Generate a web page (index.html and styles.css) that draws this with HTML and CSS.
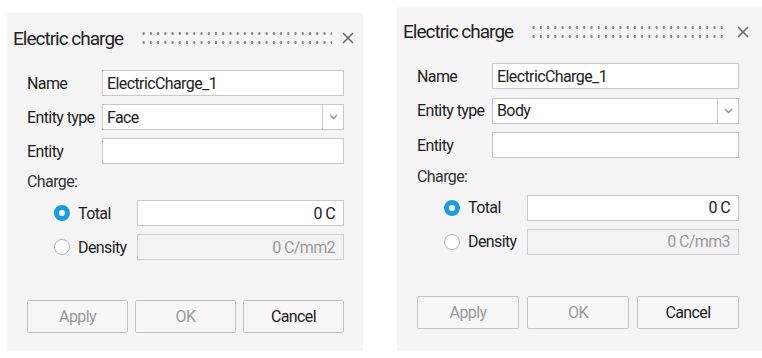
FILE: index.html
```html
<!DOCTYPE html>
<html>
<head>
<meta charset="utf-8">
<link rel="stylesheet" href="styles.css">
</head>
<body>
<div class="stage">
  <div class="panel panel-left">
    <div class="header">
      <span class="title">Electric charge</span>
      <span class="grip"></span>
      <svg class="close" width="12" height="12" viewBox="0 0 12 12"><path d="M1 1 L11 11 M11 1 L1 11" stroke="#6b6b6b" stroke-width="1.6" fill="none"/></svg>
    </div>
    <div class="form">
      <div class="row"><span class="label">Name</span><div class="field">ElectricCharge_1</div></div>
      <div class="row"><span class="label">Entity type</span><div class="field select"><span class="sel-text">Face</span><span class="sel-btn"><svg width="9" height="6" viewBox="0 0 9 6"><path d="M1 1 L4.5 4.5 L8 1" stroke="#8a8a8a" stroke-width="1.3" fill="none"/></svg></span></div></div>
      <div class="row"><span class="label">Entity</span><div class="field"></div></div>
      <div class="charge-label">Charge:</div>
      <div class="opt first"><span class="radio on"></span><span class="opt-label">Total</span><div class="field num">0 C</div></div>
      <div class="opt"><span class="radio"></span><span class="opt-label">Density</span><div class="field num disabled">0 C/mm2</div></div>
      <div class="buttons">
        <div class="btn disabled">Apply</div>
        <div class="btn disabled">OK</div>
        <div class="btn">Cancel</div>
      </div>
    </div>
  </div>
  <div class="panel panel-right">
    <div class="header">
      <span class="title">Electric charge</span>
      <span class="grip"></span>
      <svg class="close" width="12" height="12" viewBox="0 0 12 12"><path d="M1 1 L11 11 M11 1 L1 11" stroke="#6b6b6b" stroke-width="1.6" fill="none"/></svg>
    </div>
    <div class="form">
      <div class="row"><span class="label">Name</span><div class="field">ElectricCharge_1</div></div>
      <div class="row"><span class="label">Entity type</span><div class="field select"><span class="sel-text">Body</span><span class="sel-btn"><svg width="9" height="6" viewBox="0 0 9 6"><path d="M1 1 L4.5 4.5 L8 1" stroke="#8a8a8a" stroke-width="1.3" fill="none"/></svg></span></div></div>
      <div class="row"><span class="label">Entity</span><div class="field"></div></div>
      <div class="charge-label">Charge:</div>
      <div class="opt first"><span class="radio on"></span><span class="opt-label">Total</span><div class="field num">0 C</div></div>
      <div class="opt"><span class="radio"></span><span class="opt-label">Density</span><div class="field num disabled">0 C/mm3</div></div>
      <div class="buttons">
        <div class="btn disabled">Apply</div>
        <div class="btn disabled">OK</div>
        <div class="btn">Cancel</div>
      </div>
    </div>
  </div>
</div>
</body>
</html>
```
FILE: styles.css
```css
html, body {
  margin: 0;
  padding: 0;
  background: #ffffff;
}
body {
  font-family: Roboto, "Liberation Sans", Arial, sans-serif;
  color: #1c1c1c;
  width: 762px;
  height: 358px;
  overflow: hidden;
}
.stage {
  display: flex;
  align-items: flex-start;
  padding-left: 7px;
  gap: 34px;
}
.panel {
  background: #f5f5f5;
  box-sizing: border-box;
}
.panel-left {
  margin-top: 13px;
  width: 356px;
  height: 338px;
}
.panel-right {
  margin-top: 7px;
  width: 365px;
  height: 344px;
}
.header {
  display: flex;
  align-items: center;
  height: 50px;
  padding: 0 9px 0 6px;
}
.panel-right .header {
  height: 49px;
  padding-right: 13px;
}
.title {
  font-size: 19px;
  color: #222;
  letter-spacing: -1px;
}
.grip {
  flex: 1;
  height: 18px;
  margin: 0 10px 0 19px;
  background-image: radial-gradient(circle, #8c8c8c 1.1px, transparent 1.5px);
  background-size: 7.24px 9px;
  background-position: -2px 0;
}
.close {
  display: block;
}
.form {
  padding: 7px 19px 0 20px;
  display: flex;
  flex-direction: column;
  font-size: 16px;
}
.panel-right .form {
  padding-right: 23px;
}
.row {
  display: flex;
  align-items: center;
  height: 26px;
  margin-bottom: 8px;
}
.panel-right .row {
  margin-bottom: 8.5px;
}
.label {
  width: 75px;
  flex: none;
  letter-spacing: -0.6px;
}
.field {
  flex: 1;
  height: 26px;
  box-sizing: border-box;
  background: #ffffff;
  border: 1px solid #c9c9c9;
  display: flex;
  align-items: center;
  padding: 0 4px;
  letter-spacing: -0.6px;
}
.select {
  padding: 0 0 0 4px;
}
.sel-text {
  flex: 1;
}
.sel-btn {
  width: 20px;
  align-self: stretch;
  border-left: 1px solid #c9c9c9;
  display: flex;
  align-items: center;
  justify-content: center;
}
.charge-label {
  margin-top: 1px;
  height: 18px;
  line-height: 18px;
  letter-spacing: -0.6px;
  color: #333;
}
.opt {
  display: flex;
  align-items: center;
  height: 26px;
  margin-top: 8px;
  padding-left: 27px;
}
.opt.first {
  margin-top: 9px;
}
.radio {
  width: 16px;
  height: 16px;
  box-sizing: border-box;
  border-radius: 50%;
  border: 1px solid #b4b4b4;
  background: #fff;
  flex: none;
}
.radio.on {
  border: 5px solid #1a9be3;
  background: #fff;
}
.opt-label {
  width: 59px;
  padding-left: 8px;
  flex: none;
  letter-spacing: -0.6px;
}
.num {
  justify-content: flex-end;
  padding-right: 8px;
}
.field.disabled {
  background: #f3f3f3;
  color: #9a9a9a;
  border-color: #cfcfcf;
}
.buttons {
  margin-top: 40px;
  display: grid;
  grid-template-columns: 1fr 1fr 1fr;
  gap: 7px;
}
.panel-right .buttons {
  margin-top: 41px;
  gap: 8px;
}
.btn {
  height: 33px;
  box-sizing: border-box;
  border: 1px solid #c4c4c4;
  border-radius: 2px;
  background: #f7f7f7;
  display: flex;
  align-items: center;
  justify-content: center;
  letter-spacing: -0.6px;
  color: #1c1c1c;
}
.btn.disabled {
  color: #9a9a9a;
}
```
